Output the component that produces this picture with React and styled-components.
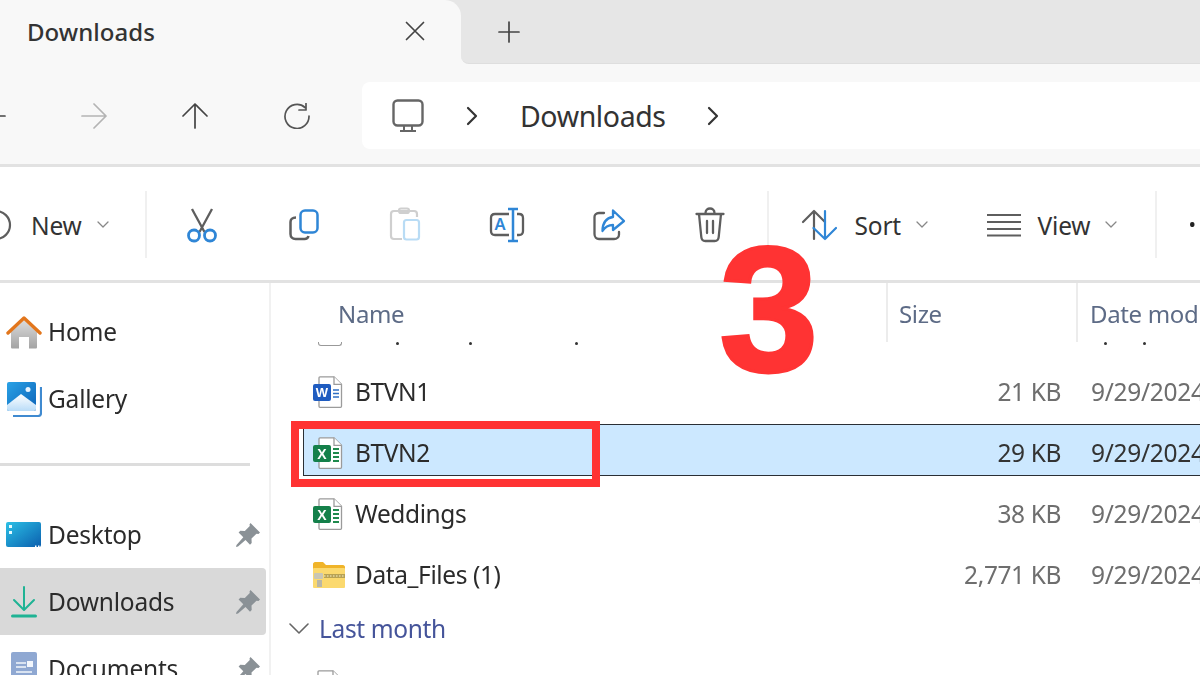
import React from "react";
import styled, { createGlobalStyle } from "styled-components";

const Global = createGlobalStyle`
  html, body { margin: 0; padding: 0; background: #fff; overflow: hidden; }
  * { box-sizing: border-box; }
`;
const Page = styled.div`
  position: relative; width: 1200px; height: 675px; overflow: hidden; background: #fff;
  font-family: "Noto Sans", "Open Sans", sans-serif; color: #2b2b2b;
`;
const Shell = styled.div`
  display: flex; flex-direction: column; width: 1200px; height: 675px; filter: blur(0.55px);
`;
const TabStrip = styled.div`
  display: flex; height: 64px; flex: none;
  background: linear-gradient(#e6e6e6 0 50%, #f8f8f8 50% 100%);
`;
const ActiveTab = styled.div`
  width: 461px; background: #f8f8f8; border-top-right-radius: 16px;
  display: flex; align-items: center; justify-content: space-between; padding: 0 36px 2px 27px;
`;
const TabTitle = styled.span`font-size: 24px; font-weight: 500; letter-spacing: 0.05px; color: #333;`;
const TabRest = styled.div`
  flex: 1; background: #e6e6e6; border-bottom-left-radius: 8px; border-bottom: 1px solid #dedede;
  display: flex; align-items: center; padding-left: 37px;
`;
const NavBar = styled.div`
  height: 103px; flex: none; background: #f8f8f8; border-bottom: 3px solid #e2e2e2;
  display: flex; align-items: flex-start; padding-top: 18px;
`;
const NavSlot = styled.div`
  width: 101.4px; height: 67px; flex: none; display: flex; align-items: center; justify-content: center;
  &:first-child { margin-left: -58px; }
`;
const AddressBar = styled.div`
  flex: 1; margin-left: 14.4px; height: 67px; background: #fff; border-radius: 8px 0 0 8px;
  display: flex; align-items: center; padding-left: 30px;
`;
const Gap = styled.span`width: ${p => p.$w}px; flex: none;`;
const Crumb = styled.span`
  font-size: 28.5px; letter-spacing: -0.4px; margin: 2px 40px 0 41px; color: #333; line-height: 1;
`;
const Toolbar = styled.div`
  height: 116px; flex: none; background: #fff; border-bottom: 3px solid #e2e2e2;
  display: flex; align-items: center; padding-top: 2px; white-space: nowrap;
`;
const NewWrap = styled.div`
  width: 145px; flex: none; display: flex; align-items: center; overflow: hidden; height: 50px;
`;
const NewIcon = styled.span`margin-left: -8px; margin-right: 19px; display: inline-flex;`;
const ToolLabel = styled.span`
  font-size: 24.5px; letter-spacing: -0.2px; color: #333; margin-left: ${p => p.$ml || 0}px; margin-top: 1px;
`;
const Caret = styled.span`margin-left: 15px; display: inline-flex;`;
const Sep = styled.div`width: 2px; height: 67px; background: #f0f0f0; flex: none; margin: ${p => p.$m || "0"};`;
const ToolSlot = styled.div`
  width: 101.6px; flex: none; display: flex; align-items: center; justify-content: center;
  padding-left: ${p => p.$shift || 0}px;
`;
const Group = styled.div`
  display: flex; align-items: center; flex: none; width: ${p => p.$w}px; padding-left: ${p => p.$pl || 0}px;
`;
const More = styled.span`font-size: 20px; color: #222; margin-left: 32px;`;
const Body = styled.div`flex: 1; display: flex; min-height: 0;`;
const Sidebar = styled.div`
  width: 271px; flex: none; border-right: 2px solid #f1f1f1; padding: 15px 0 0; overflow: hidden;
`;
const NavItem = styled.div`
  height: 67px; width: 266px; display: flex; align-items: center; padding: 0 6px 0 0;
  border-radius: 0 4px 4px 0; background: ${p => p.$active ? "#d9d9d9" : "transparent"};
`;
const NavIcon = styled.div`width: 48px; flex: none; display: flex; justify-content: center;`;
const NavText = styled.span`flex: 1; font-size: 24.5px; letter-spacing: -0.22px; color: #2b2b2b;`;
const Divider = styled.div`width: 250px; height: 3px; background: #dddddd; margin: 31px 0 35px;`;
const Main = styled.div`flex: 1; display: flex; flex-direction: column; min-width: 0; overflow: hidden;`;
const Header = styled.div`height: 59px; flex: none; display: flex; align-items: flex-start; color: #5d6b86;`;
const HeadCell = styled.div`
  width: ${p => p.$w}px; height: 59px; flex: none; padding-left: ${p => p.$pl}px; padding-top: 14px;
  font-size: 24px; letter-spacing: -0.35px; white-space: nowrap;
  border-right: ${p => p.$last ? "none" : "2px solid #ececec"};
`;
const Stub = styled.div`
  height: 21px; flex: none; display: flex; align-items: flex-start; padding-left: 47px;
`;
const StubIcon = styled.div`
  width: 24px; height: 4px; border: 1.5px solid #999; border-top: none; border-radius: 0 0 3px 3px; flex: none;
`;
const Dot = styled.span`
  width: 3px; height: 3px; border-radius: 50%; background: #333; flex: none; margin-left: ${p => p.$m}px;
`;
const Row = styled.div`
  height: 52px; flex: none; margin: 0 0 9px 32px; padding: 5px 0 0 9px; display: flex; align-items: center;
  white-space: nowrap;
  background: ${p => p.$sel ? "#cce8ff" : "transparent"};
  border: 1.5px solid ${p => p.$sel ? "#2a2f35" : "transparent"};
  border-right: none;
`;
const FileIcon = styled.div`width: 42px; flex: none; display: flex;`;
const FileName = styled.span`width: 600px; flex: none; font-size: 24.5px; letter-spacing: -0.4px; color: #2b2b2b;`;
const FileSize = styled.span`
  width: 106px; flex: none; text-align: right; font-size: 24.5px; letter-spacing: -0.4px;
  color: ${p => p.$sel ? "#333" : "#6e6e6e"};
`;
const FileDate = styled.span`
  margin-left: 30px; font-size: 24.5px; letter-spacing: -0.3px; color: ${p => p.$sel ? "#333" : "#6e6e6e"};
`;
const GroupHead = styled.div`
  height: 43px; flex: none; display: flex; align-items: center; padding-left: 18px; margin-bottom: 20px;
  font-size: 24.5px; letter-spacing: -0.35px; color: #45549a;
`;
const GroupLabel = styled.span`margin-left: 10px;`;
const TailIcon = styled.div`padding-left: 41px; flex: none;`;
const BigThree = styled.div`
  position: absolute; left: 719px; top: 220px; font-family: "Liberation Sans", Arial, sans-serif; font-weight: 700;
  font-size: 179px; line-height: 179px; color: #ff3333; -webkit-text-stroke: 3px #ff3333;
`;
const RedBox = styled.div`
  position: absolute; left: 291px; top: 421px; width: 309px; height: 66px; border: 8px solid #ff3333;
`;

const Line = ({ d, w = 26, h = 26, vb = "0 0 26 26", c = "#444", sw = 1.7 }) => (
  <svg width={w} height={h} viewBox={vb} fill="none" stroke={c} strokeWidth={sw} strokeLinecap="round" strokeLinejoin="round">
    <path d={d} />
  </svg>
);
const G = "#5e5e5e";
const B = "#2f86d6";
const Monitor = () => (
  <svg width="32" height="34" viewBox="0 0 32 34" fill="none" stroke="#666" strokeWidth="2.4" strokeLinejoin="round">
    <rect x="1.5" y="1.5" width="29" height="25" rx="4" />
    <path d="M12 27v4M20 27v4M8 32h16" strokeWidth="2" />
  </svg>
);
const Chev = () => <Line w={14} h={20} vb="0 0 14 20" d="M3 2l8 8-8 8" c="#333" sw={2.2} />;
const SmallChev = () => (
  <Caret><Line w={12} h={8} vb="0 0 12 8" d="M1 1l5 5 5-5" c="#888" sw={1.3} /></Caret>
);
const Cut = () => (
  <svg width="32" height="36" viewBox="0 0 32 36" fill="none" strokeWidth="2.3">
    <path d="M6 2l12.5 23M26 2L13.500 25" stroke={G} />
    <circle cx="8" cy="28.500" r="5.500" stroke={B} strokeWidth="2.8" />
    <circle cx="24" cy="28.500" r="5.500" stroke={B} strokeWidth="2.8" />
  </svg>
);
const Copy = () => (
  <svg width="32" height="32" viewBox="0 0 32 32" fill="none" strokeWidth="2.5">
    <path d="M7 8.500C3 8.500 1.500 11 1.500 13v12c0 3 2 5 5 5h9c2 0 3.500-1 4-3" stroke={G} />
    <rect x="11.500" y="1.500" width="17" height="22" rx="4.500" stroke={B} />
  </svg>
);
const Paste = () => (
  <svg width="32" height="36" viewBox="0 0 32 36" fill="none" strokeWidth="2.2">
    <path d="M13 32H5c-2 0-3-1.500-3-3V7c0-2 1-3 3-3h20c2 0 3 1 3 3v3" stroke="#cfcfcf" />
    <rect x="10" y="1.500" width="10" height="4.500" rx="2" stroke="#cfcfcf" />
    <rect x="15" y="13" width="15" height="19.500" rx="2.500" stroke="#b9dcf5" />
  </svg>
);
const Rename = () => (
  <svg width="36" height="36" viewBox="0 0 36 36" fill="none">
    <path d="M20 7H6c-3 0-4 1.500-4 4v13c0 2.500 1 4 4 4h14M28 7h2c3 0 4 1.500 4 4v13c0 2.500-1 4-4 4h-2" stroke={G} strokeWidth="2.3" />
    <path d="M24 2v32M19 2h10M19 34h10" stroke={B} strokeWidth="2.5" />
    <text x="5.500" y="23" fontSize="16.500" fontWeight="600" fill={B} stroke="none" fontFamily="Noto Sans, sans-serif">A</text>
  </svg>
);
const Share = () => (
  <svg width="34" height="32" viewBox="0 0 34 32" fill="none" strokeLinejoin="round" strokeLinecap="round">
    <path d="M11 4H6C3 4 1.500 6 1.500 8v17c0 3 2 5 4.500 5h15c3 0 5-2 5-4.500V23" stroke={G} strokeWidth="2.3" />
    <path d="M20 1.500L31 12 20 21v-5c-5 0-8 2-10.500 6 0-8 4-13 10.500-14z" stroke={B} strokeWidth="2.3" />
  </svg>
);
const Trash = () => (
  <svg width="30" height="36" viewBox="0 0 30 36" fill="none" stroke={G} strokeWidth="2.3" strokeLinecap="round">
    <path d="M1.500 7h27M10.500 6c0-6 9-6 9 0M4 7l2.300 23c.2 2.500 1.700 4 4 4h9.400c2.300 0 3.800-1.500 4-4L26 7M12 14v12M18 14v12" />
  </svg>
);
const Sort = () => (
  <svg width="36" height="32" viewBox="0 0 36 32" fill="none" strokeWidth="2.2" strokeLinecap="round" strokeLinejoin="round">
    <path d="M13 30V2M2 13L13 2l11 11" stroke={G} />
    <path d="M24 2v28M12.500 19L24 30l11-11" stroke={B} />
  </svg>
);
const View = () => (
  <svg width="34" height="24" viewBox="0 0 34 24" fill="none" stroke={G} strokeWidth="2.1">
    <path d="M0 2h34M0 9h34M0 16h34M0 22.500h34" />
  </svg>
);
const Home = () => (
  <svg width="36" height="34" viewBox="0 0 36 34">
    <defs><linearGradient id="hg" x1="0" x2="0" y1="0" y2="1"><stop offset="0" stopColor="#dcdcdc" /><stop offset="1" stopColor="#a3a3a3" /></linearGradient></defs>
    <path d="M18 5L5 17v15c0 1 .5 1.500 1.500 1.500H13V22h10v11.500h6.500c1 0 1.500-.5 1.500-1.500V17z" fill="url(#hg)" />
    <path d="M2 18L18 3l16 15" fill="none" stroke="#e2761c" strokeWidth="3.400" strokeLinecap="round" strokeLinejoin="round" />
  </svg>
);
const Gallery = () => (
  <svg width="36" height="36" viewBox="0 0 36 36">
    <defs>
      <linearGradient id="gg" x1="0" x2="1" y1="0" y2="1"><stop offset="0" stopColor="#2aa2e6" /><stop offset="1" stopColor="#0c63b8" /></linearGradient>
      <linearGradient id="gm" x1="0" x2="0" y1="0" y2="1"><stop offset="0" stopColor="#fff" /><stop offset="1" stopColor="#b9dcf8" /></linearGradient>
    </defs>
    <path d="M35 6v26c0 2-1 3-3 3H7" fill="none" stroke="#3f8ad0" strokeWidth="2.200" />
    <rect x="1" y="1" width="29" height="29" rx="2" fill="url(#gg)" />
    <circle cx="22" cy="8.500" r="2.500" fill="#e8f4ff" />
    <path d="M1 24L15 13l15 11v4c0 1-1 2-2 2H3c-1 0-2-1-2-2z" fill="url(#gm)" />
  </svg>
);
const Desktop = () => (
  <svg width="36" height="26" viewBox="0 0 36 26">
    <defs><linearGradient id="dg" x1="0" x2="1" y1="0" y2="1"><stop offset="0" stopColor="#2bc0e6" /><stop offset="1" stopColor="#0b5fae" /></linearGradient></defs>
    <rect x="0" y="0" width="35" height="25" rx="2" fill="url(#dg)" />
    <rect x="3" y="3" width="3" height="3" fill="#e6fbff" />
    <rect x="3" y="9" width="3" height="3" fill="#e6fbff" />
    <rect x="29" y="23.500" width="1.500" height="1.500" fill="#fff" />
    <rect x="32" y="23.500" width="1.500" height="1.500" fill="#fff" />
  </svg>
);
const DownloadIco = () => (
  <svg width="26" height="34" viewBox="0 0 26 34" fill="none" stroke="#1fb394" strokeLinecap="round" strokeLinejoin="round">
    <path d="M13 2v22M3 15l10 10 10-10" strokeWidth="2" />
    <path d="M1.500 31h23" strokeWidth="3" />
  </svg>
);
const Docs = () => (
  <svg width="26" height="34" viewBox="0 0 26 34">
    <rect x="0" y="0" width="26" height="34" rx="2" fill="#8fa8d2" />
    <path d="M5 11h10M5 15h10M5 20h16" stroke="#f2f6fc" strokeWidth="1.500" />
    <rect x="16" y="9" width="6" height="6" fill="#f2f6fc" />
  </svg>
);
const Pin = ({ c = "#8a9196" }) => (
  <svg width="24" height="24" viewBox="0 0 24 24">
    <path d="M14.500 0L24 9.500l-1.500 1.500-2-.3-5 4.800.2 4.500-1.700 1.700-4.500-4.700L2 23.500l-2 .5.500-2 6.800-7.800L2.600 9.500l1.700-1.700 4.500.2 5-5-.3-1.500z" fill={c} />
  </svg>
);
const Sheet = ({ children }) => (
  <svg width="30" height="32" viewBox="0 0 30 32">
    <path d="M7 .8h14l7.500 7.500v22a1 1 0 0 1-1 1H7a1 1 0 0 1-1-1v-28.500a1 1 0 0 1 1-1z" fill="#fff" stroke="#9b9b9b" strokeWidth="1.300" />
    <path d="M21 .8v7.500h7.500" fill="#fff" stroke="#9b9b9b" strokeWidth="1.300" />
    {children}
  </svg>
);
const Word = () => (
  <Sheet>
    <path d="M20 14h6M20 17.500h6M20 21h6" stroke="#2f6fc4" strokeWidth="1.300" />
    <rect x="0" y="8" width="18" height="17" rx="2" fill="#1f5cc0" />
    <text x="9" y="21" textAnchor="middle" fontSize="13" fontWeight="700" fill="#fff" fontFamily="Liberation Sans, sans-serif">W</text>
  </Sheet>
);
const Excel = () => (
  <Sheet>
    <path d="M20 12h6M20 16h6M20 20h6M20 24h6" stroke="#1f8a4d" strokeWidth="2" />
    <rect x="0" y="8" width="18" height="17" rx="2" fill="#14804a" />
    <text x="9" y="21.500" textAnchor="middle" fontSize="14" fontWeight="700" fill="#fff" fontFamily="Liberation Sans, sans-serif">X</text>
  </Sheet>
);
const Zip = () => (
  <svg width="32" height="26" viewBox="0 0 32 26">
    <path d="M0 2c0-1 1-2 2-2h8l3 3h17c1 0 2 1 2 2v3H0z" fill="#f0b429" />
    <rect x="0" y="6" width="32" height="20" rx="1" fill="#fbd96e" />
    <rect x="11" y="12" width="21" height="4" fill="#b8a254" />
    <path d="M11 14h21" stroke="#f8f1c8" strokeWidth="1.200" strokeDasharray="1.500 1.500" />
    <rect x="1" y="11" width="9" height="6" rx="1" fill="#c9c6b4" />
    <rect x="4" y="18" width="5" height="7" fill="#b9b6a6" />
  </svg>
);

const files = [
  { name: "BTVN1", size: "21 KB", icon: <Word /> },
  { name: "BTVN2", size: "29 KB", icon: <Excel />, sel: true },
  { name: "Weddings", size: "38 KB", icon: <Excel /> },
  { name: "Data_Files (1)", size: "2,771 KB", icon: <Zip /> },
];

export default function App() {
  return (
    <Page>
      <Global />
      <Shell>
        <TabStrip>
          <ActiveTab>
            <TabTitle>Downloads</TabTitle>
            <Line w={20} h={20} vb="0 0 20 20" d="M1.500 1.500l17 17M18.500 1.500l-17 17" c="#444" sw={1.7} />
          </ActiveTab>
          <TabRest>
            <Line w={22} h={22} vb="0 0 22 22" d="M11 1v20M1 11h20" c="#444" sw={1.7} />
          </TabRest>
        </TabStrip>
        <NavBar>
          <NavSlot><Line d="M25 13H1M13 1L1 13l12 12" /></NavSlot>
          <NavSlot><Line d="M1 13h24M13 1l12 12-12 12" c="#b4b4b4" /></NavSlot>
          <NavSlot><Line d="M13 25V1M1 13L13 1l12 12" /></NavSlot>
          <NavSlot><Line d="M21 4.500A12 12 0 1 0 25 13M22 .5v6.500h-7" c="#555" /></NavSlot>
          <AddressBar>
            <Monitor />
            <Gap $w={41} />
            <Chev />
            <Crumb>Downloads</Crumb>
            <Chev />
          </AddressBar>
        </NavBar>
        <Toolbar>
          <NewWrap>
            <NewIcon>
              <svg width="20" height="32" viewBox="0 0 20 32" fill="none" strokeWidth="2.200">
                <circle cx="4" cy="16" r="14" stroke={G} />
                <path d="M-3 16h10" stroke={B} />
              </svg>
            </NewIcon>
            <ToolLabel>New</ToolLabel>
            <SmallChev />
          </NewWrap>
          <Sep $m="0 4px 0 0" />
          <ToolSlot><Cut /></ToolSlot>
          <ToolSlot $shift={3}><Copy /></ToolSlot>
          <ToolSlot><Paste /></ToolSlot>
          <ToolSlot><Rename /></ToolSlot>
          <ToolSlot $shift={3}><Share /></ToolSlot>
          <ToolSlot><Trash /></ToolSlot>
          <Sep $m="0 0 0 6px" />
          <Group $w={185} $pl={32}>
            <Sort />
            <ToolLabel $ml={18}>Sort</ToolLabel>
            <SmallChev />
          </Group>
          <Group $w={201} $pl={33}>
            <View />
            <ToolLabel $ml={17}>View</ToolLabel>
            <SmallChev />
          </Group>
          <Sep />
          <More>•</More>
        </Toolbar>
        <Body>
          <Sidebar>
            <NavItem><NavIcon><Home /></NavIcon><NavText>Home</NavText></NavItem>
            <NavItem><NavIcon><Gallery /></NavIcon><NavText>Gallery</NavText></NavItem>
            <Divider />
            <NavItem><NavIcon><Desktop /></NavIcon><NavText>Desktop</NavText><Pin /></NavItem>
            <NavItem $active><NavIcon><DownloadIco /></NavIcon><NavText>Downloads</NavText><Pin /></NavItem>
            <NavItem><NavIcon><Docs /></NavIcon><NavText>Documents</NavText><Pin /></NavItem>
          </Sidebar>
          <Main>
            <Header>
              <HeadCell $w={617} $pl={67}>Name</HeadCell>
              <HeadCell $w={190} $pl={11}>Size</HeadCell>
              <HeadCell $w={123} $pl={12} $last>Date modified</HeadCell>
            </Header>
            <Stub>
              <StubIcon />
              <Dot $m={54} /><Dot $m={70} /><Dot $m={103} /><Dot $m={526} /><Dot $m={36} />
            </Stub>
            {files.map(f => (
              <Row key={f.name} $sel={f.sel}>
                <FileIcon>{f.icon}</FileIcon>
                <FileName>{f.name}</FileName>
                <FileSize $sel={f.sel}>{f.size}</FileSize>
                <FileDate $sel={f.sel}>9/29/2024</FileDate>
              </Row>
            ))}
            <GroupHead>
              <Line w={20} h={12} vb="0 0 20 12" d="M1 1l9 9 9-9" c="#666" sw={1.600} />
              <GroupLabel>Last month</GroupLabel>
            </GroupHead>
            <TailIcon><Sheet /></TailIcon>
          </Main>
        </Body>
      </Shell>
      <BigThree>3</BigThree>
      <RedBox />
    </Page>
  );
}
